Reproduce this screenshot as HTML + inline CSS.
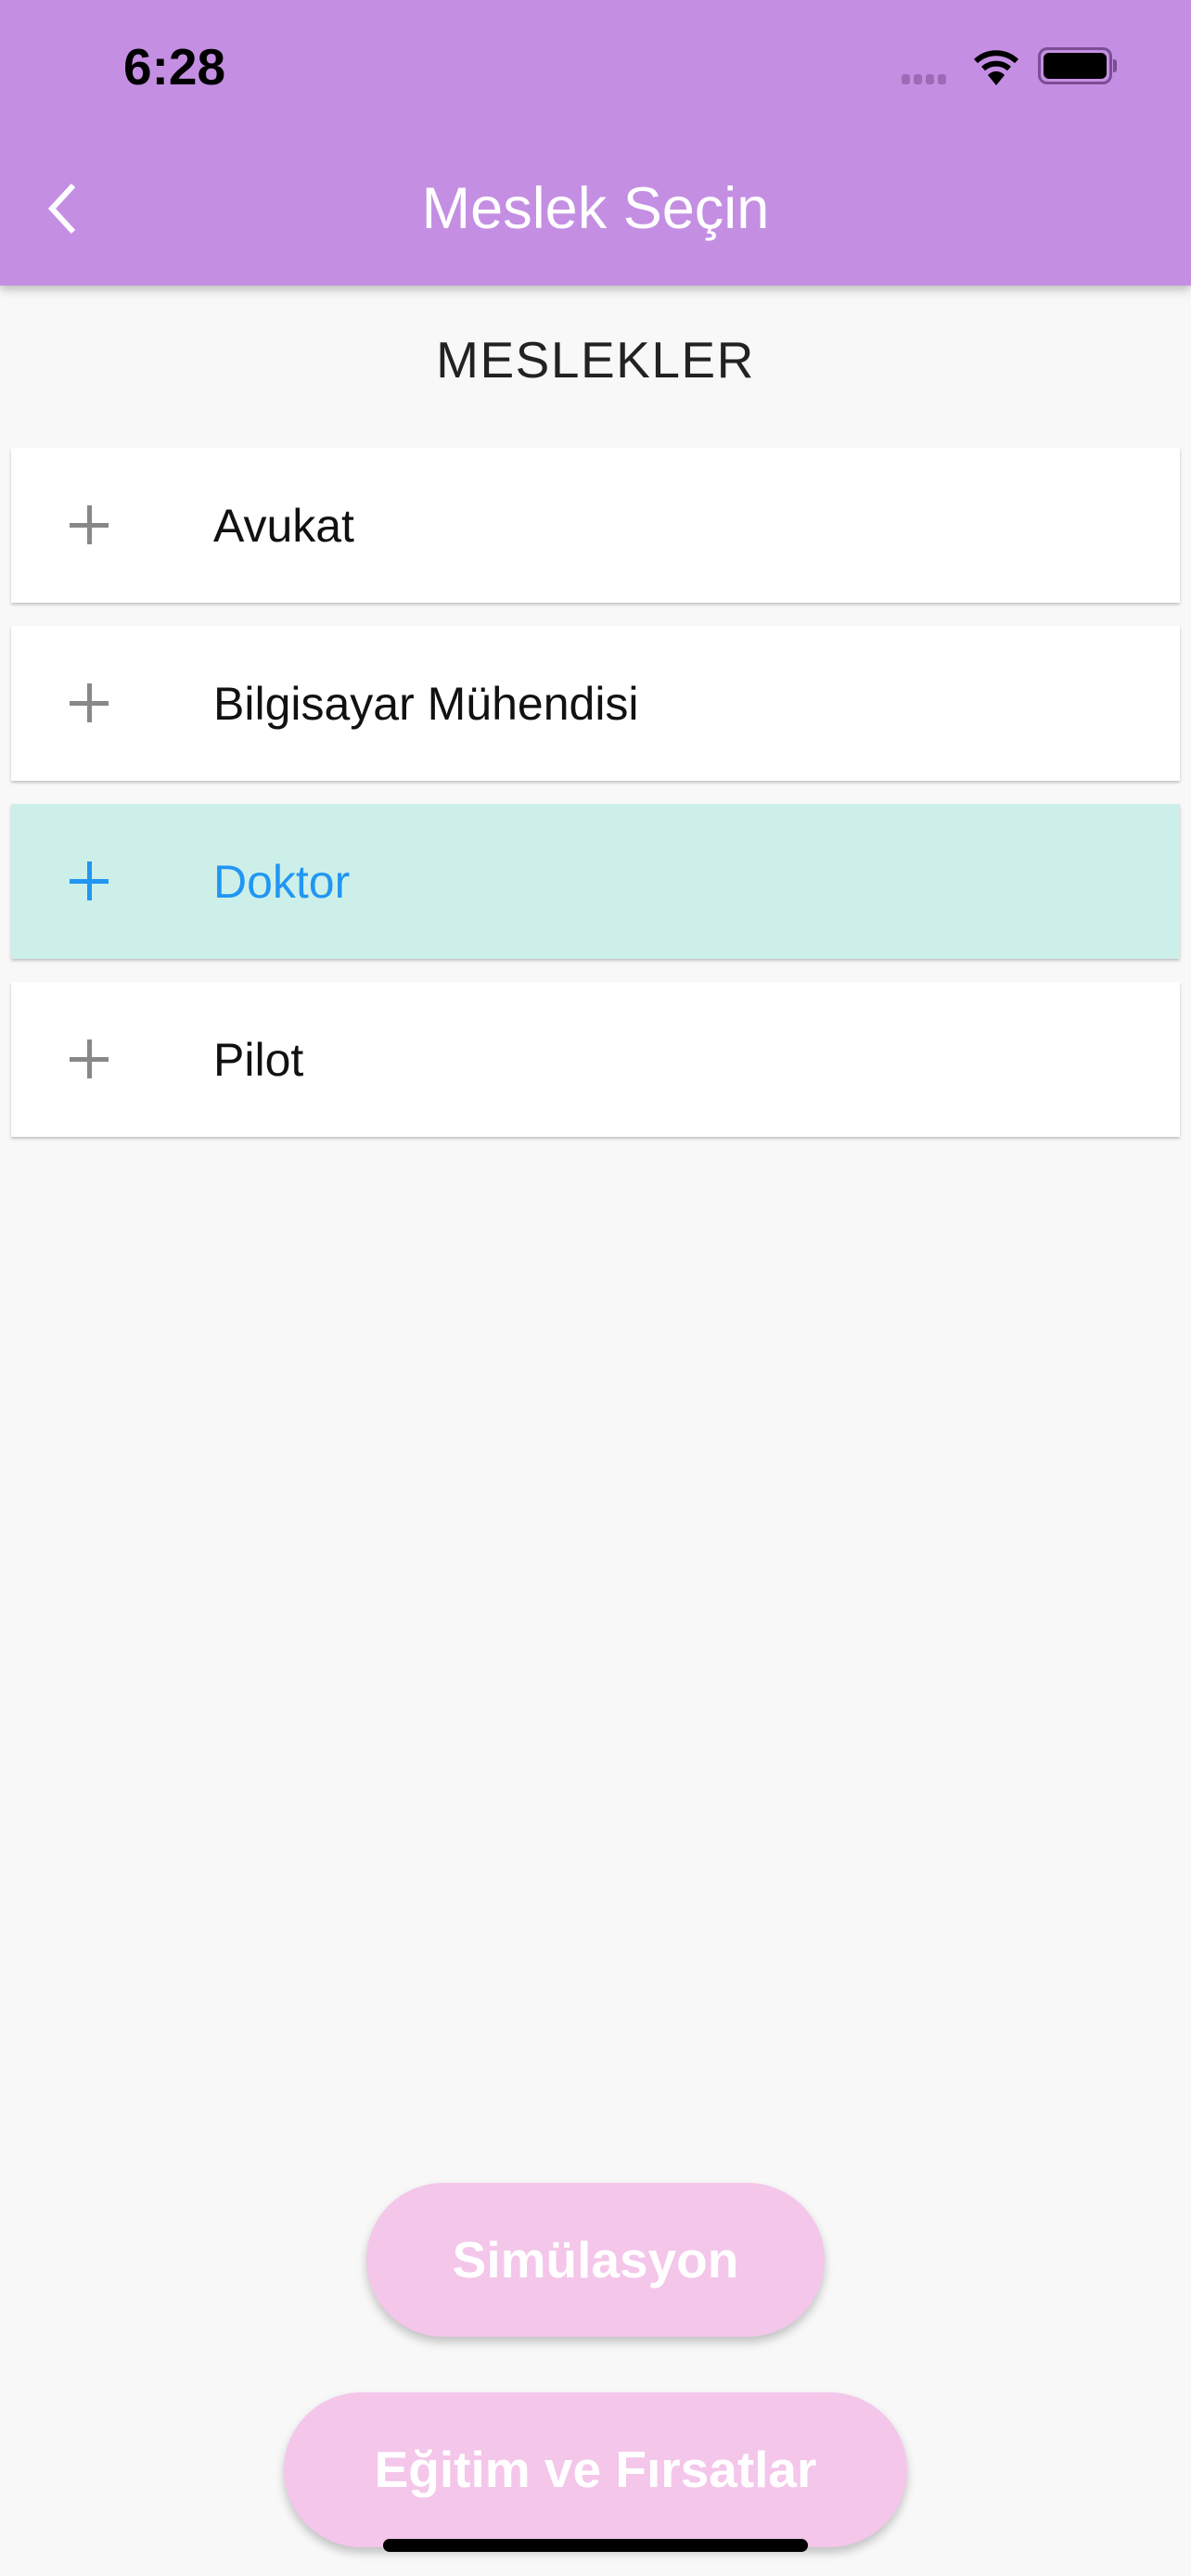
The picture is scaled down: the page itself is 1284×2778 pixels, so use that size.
<!DOCTYPE html>
<html><head><meta charset="utf-8"><style>
*{margin:0;padding:0;box-sizing:border-box}
body{width:1284px;height:2778px;background:#f8f8f8;font-family:"Liberation Sans",sans-serif;position:relative;overflow:hidden}
.bar{position:absolute;left:0;top:0;width:1284px;height:308px;background:#c48fe3;box-shadow:0 4px 10px rgba(0,0,0,.25)}
.time{position:absolute;left:133px;top:40px;font-size:55px;font-weight:bold;color:#000}
.title{position:absolute;left:0;width:1284px;top:189px;text-align:center;color:#fff;font-size:63px}
.head{position:absolute;left:0;width:1284px;top:356px;text-align:center;color:#222;font-size:55px;letter-spacing:1.5px}
.card{position:absolute;left:12px;width:1260px;height:167px;background:#fff;box-shadow:0 2px 3px rgba(0,0,0,.22)}
.card .pl{position:absolute;left:63px;top:62px;width:42px;height:42px}
.card .pl:before{content:"";position:absolute;left:19px;top:0;width:5px;height:42px;background:#888}
.card .pl:after{content:"";position:absolute;left:0;top:19px;width:42px;height:5px;background:#888}
.card span{position:absolute;left:218px;top:55px;font-size:50px;color:#111}
.sel{background:#cdefe9}
.sel span{color:#2196f3}
.sel .pl:before,.sel .pl:after{background:#2196f3}
.btn{position:absolute;background:#f4c6ea;border-radius:84px;color:#fff;font-weight:bold;font-size:55px;text-align:center;box-shadow:0 6px 10px rgba(0,0,0,.22)}
</style></head><body>
<div class="bar">
<div class="time">6:28</div>
<div style="position:absolute;left:972px;top:80px;">
<span style="position:absolute;left:0;top:0;width:9px;height:11px;border-radius:3px;background:#9b6bb5"></span>
<span style="position:absolute;left:13px;top:0;width:9px;height:11px;border-radius:3px;background:#9b6bb5"></span>
<span style="position:absolute;left:26px;top:0;width:9px;height:11px;border-radius:3px;background:#9b6bb5"></span>
<span style="position:absolute;left:39px;top:0;width:9px;height:11px;border-radius:3px;background:#9b6bb5"></span>
</div>
<svg style="position:absolute;left:1048px;top:52px" width="52" height="40" viewBox="0 0 52 40"><path d="M4 14 A32 32 0 0 1 48 14" stroke="#000" stroke-width="6" fill="none"/><path d="M12 22 A21 21 0 0 1 40 22" stroke="#000" stroke-width="6" fill="none"/><path d="M26 40 L17 29 A12 12 0 0 1 35 29 Z" fill="#000"/></svg>
<div style="position:absolute;left:1119px;top:51px;width:80px;height:40px;border:3px solid #7a4d94;border-radius:10px;padding:3px"><div style="width:100%;height:100%;background:#000;border-radius:6px"></div></div>
<div style="position:absolute;left:1200px;top:64px;width:4px;height:14px;background:#7a4d94;border-radius:0 3px 3px 0"></div>
<svg style="position:absolute;left:46px;top:195px" width="40" height="60" viewBox="0 0 40 60"><path d="M33 5 L10 30 L33 55" stroke="#fff" stroke-width="6" fill="none"/></svg>
<div class="title">Meslek Seçin</div>
</div>
<div class="head">MESLEKLER</div>
<div class="card" style="top:483px"><i class="pl"></i><span>Avukat</span></div>
<div class="card" style="top:675px"><i class="pl"></i><span>Bilgisayar Mühendisi</span></div>
<div class="card sel" style="top:867px"><i class="pl"></i><span>Doktor</span></div>
<div class="card" style="top:1059px"><i class="pl"></i><span>Pilot</span></div>
<div class="btn" style="left:395px;top:2354px;width:494px;height:166px;line-height:166px">Simülasyon</div>
<div class="btn" style="left:306px;top:2580px;width:672px;height:167px;line-height:167px">Eğitim ve Fırsatlar</div>
<div style="position:absolute;left:413px;top:2738px;width:458px;height:14px;background:#000;border-radius:7px"></div>
</body></html>
